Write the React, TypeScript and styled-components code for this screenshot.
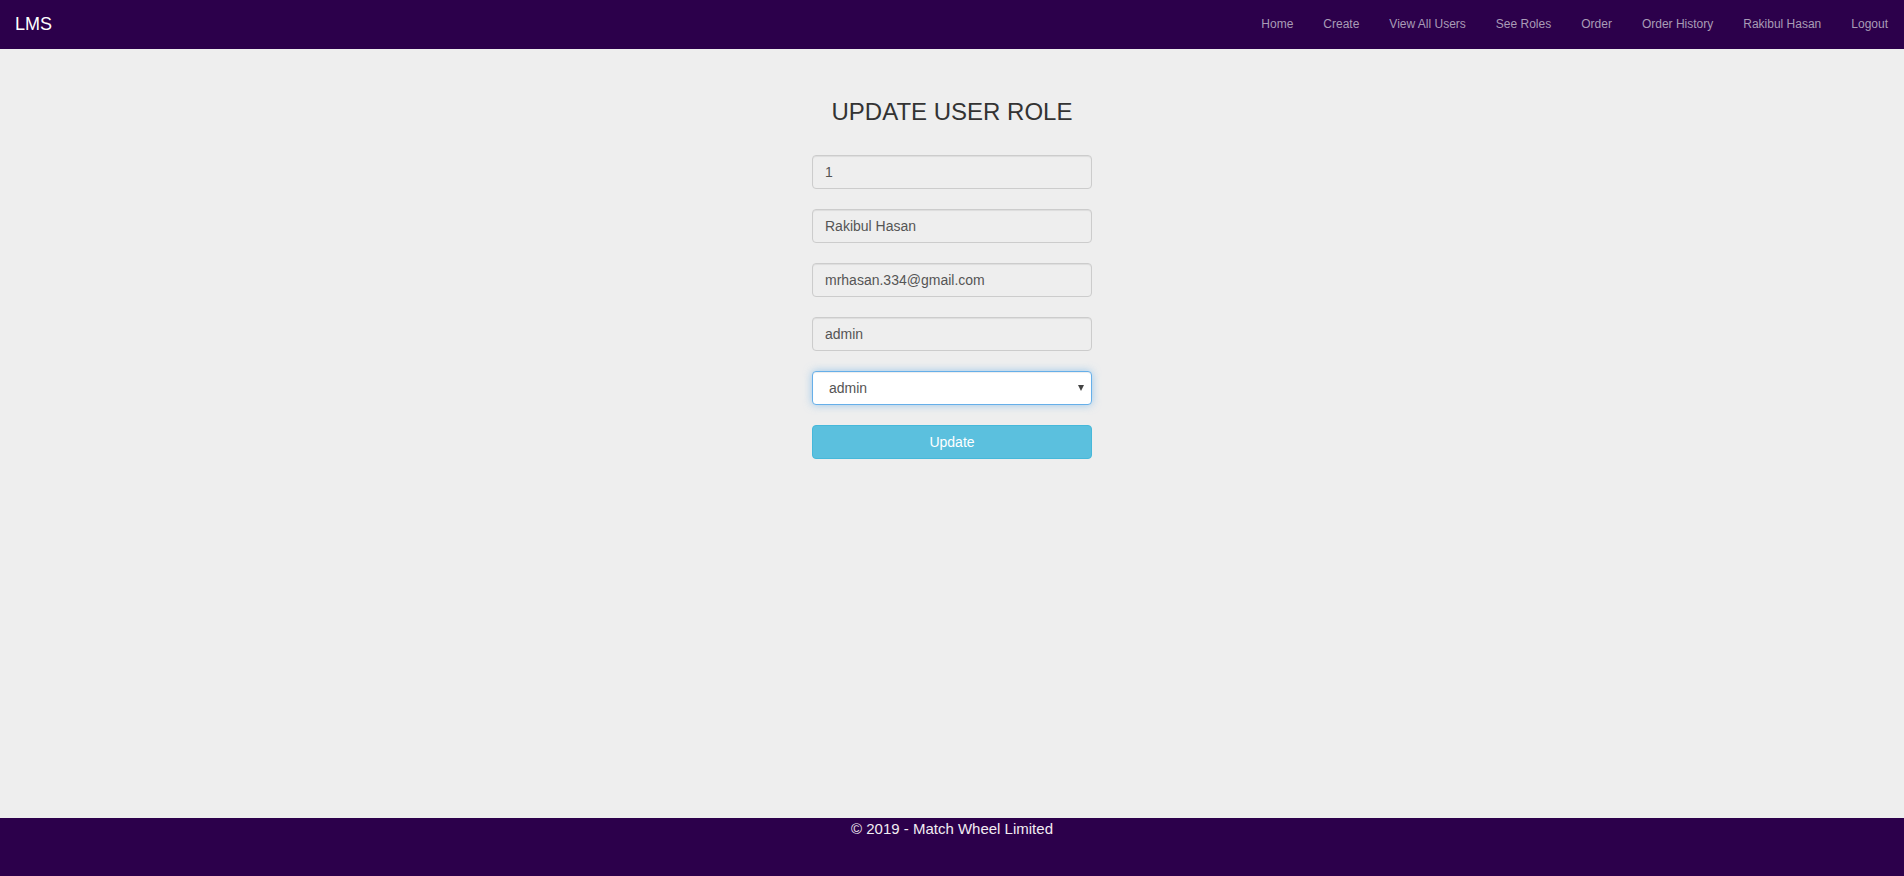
import React from "react";
import styled, { createGlobalStyle } from "styled-components";

const GlobalStyle = createGlobalStyle`
  * { box-sizing: border-box; }
  html, body { margin: 0; padding: 0; }
  body {
    background: #eeeeee;
    font-family: "Liberation Sans", Arial, Helvetica, sans-serif;
    font-size: 14px;
    color: #333;
  }
`;

const Page = styled.div`
  min-height: 100vh;
  display: flex;
  flex-direction: column;
`;

const NavBar = styled.header`
  height: 49px;
  background: #2c004b;
  display: flex;
  align-items: center;
  justify-content: space-between;
`;

const Brand = styled.a`
  padding: 0 15px;
  font-size: 18px;
  line-height: 49px;
  color: #ffffff;
  text-decoration: none;
`;

const NavList = styled.nav`
  display: flex;
  align-items: center;
  padding-right: 1px;
`;

const NavLink = styled.a`
  padding: 0 15px;
  font-size: 12px;
  line-height: 49px;
  color: #a99cb6;
  text-decoration: none;
`;

const Main = styled.main`
  flex: 1;
  display: flex;
  flex-direction: column;
  align-items: center;
`;

const Title = styled.h3`
  margin: 50px 0 30px;
  font-size: 24px;
  font-weight: 400;
  line-height: 1.1;
  color: #333;
`;

const Form = styled.form`
  width: 280px;
  display: flex;
  flex-direction: column;
  gap: 20px;
`;

const Input = styled.input`
  width: 100%;
  height: 34px;
  padding: 6px 12px;
  font-family: inherit;
  font-size: 14px;
  color: #555;
  background: #eeeeee;
  border: 1px solid #ccc;
  border-radius: 4px;
  box-shadow: inset 0 1px 1px rgba(0, 0, 0, 0.075);
  outline: none;
`;

const SelectWrap = styled.div`
  position: relative;
  width: 100%;
`;

const Select = styled.select`
  width: 100%;
  height: 34px;
  padding: 6px 12px 6px 16px;
  font-family: inherit;
  font-size: 14px;
  color: #555;
  background: #ffffff;
  border: 1px solid #66afe9;
  border-radius: 4px;
  box-shadow: inset 0 1px 1px rgba(0, 0, 0, 0.075), 0 0 8px rgba(102, 175, 233, 0.6);
  appearance: none;
  -webkit-appearance: none;
  outline: none;
`;

const Arrow = styled.span`
  position: absolute;
  right: 8px;
  top: 50%;
  transform: translateY(-50%);
  width: 0;
  height: 0;
  border-left: 3.5px solid transparent;
  border-right: 3.5px solid transparent;
  border-top: 6px solid #444;
  pointer-events: none;
`;

const Button = styled.button`
  width: 100%;
  height: 34px;
  font-family: inherit;
  font-size: 14px;
  color: #fff;
  background: #5bc0de;
  border: 1px solid #46b8da;
  border-radius: 4px;
  cursor: pointer;
`;

const Footer = styled.footer`
  height: 58px;
  padding-top: 1px;
  background: #2c004b;
  color: #f2ecf2;
  text-align: center;
  font-size: 15px;
  line-height: 20px;
`;

const links = [
  "Home",
  "Create",
  "View All Users",
  "See Roles",
  "Order",
  "Order History",
  "Rakibul Hasan",
  "Logout",
];

export default function App() {
  return (
    <Page>
      <GlobalStyle />
      <NavBar>
        <Brand href="#">LMS</Brand>
        <NavList>
          {links.map((l) => (
            <NavLink key={l} href="#">
              {l}
            </NavLink>
          ))}
        </NavList>
      </NavBar>
      <Main>
        <Title>UPDATE USER ROLE</Title>
        <Form onSubmit={(e) => e.preventDefault()}>
          <Input readOnly value="1" />
          <Input readOnly value="Rakibul Hasan" />
          <Input readOnly value="mrhasan.334@gmail.com" />
          <Input readOnly value="admin" />
          <SelectWrap>
            <Select defaultValue="admin">
              <option value="admin">admin</option>
              <option value="user">user</option>
            </Select>
            <Arrow />
          </SelectWrap>
          <Button type="submit">Update</Button>
        </Form>
      </Main>
      <Footer>© 2019 - Match Wheel Limited</Footer>
    </Page>
  );
}
